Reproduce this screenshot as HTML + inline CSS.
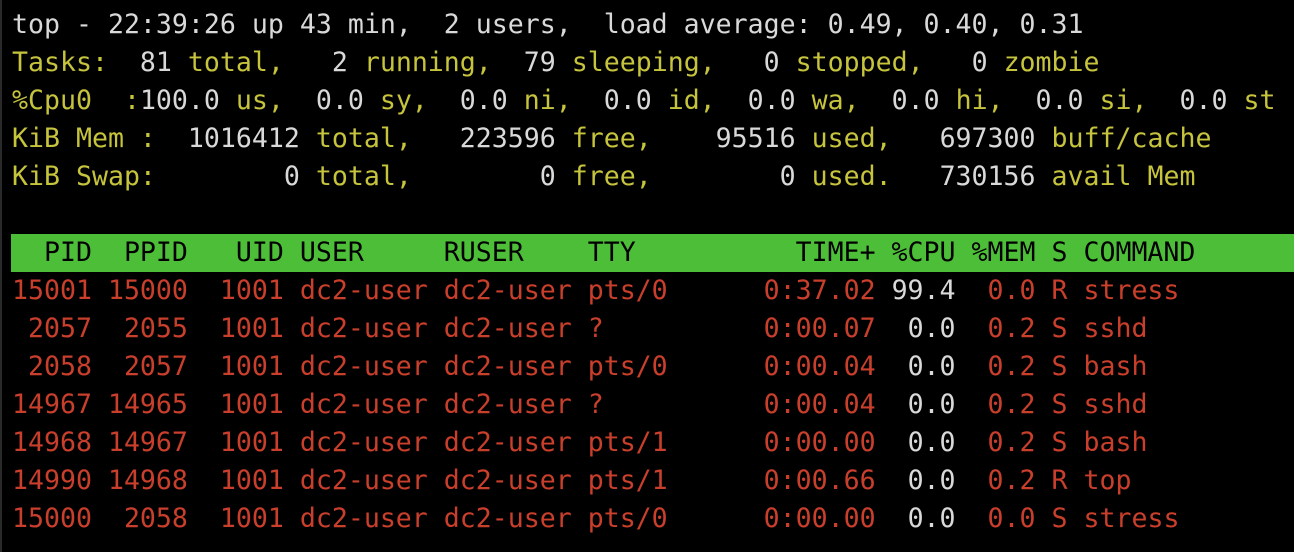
<!DOCTYPE html>
<html><head><meta charset="utf-8"><style>
html,body{margin:0;padding:0;background:#000;width:1294px;height:552px;overflow:hidden}
body{border-left:2px solid #2a2a2a;box-sizing:border-box}
pre{margin:0;position:absolute;left:12px;top:6px;font-family:"DejaVu Sans Mono","Liberation Mono",monospace;font-size:26.57px;line-height:38px;color:#d9d9d9;white-space:pre}
.y{color:#c6c33d}.r{color:#c93f2c}.w{color:#d9d9d9}
.h{display:block;background:#4dbe38;color:#000;width:1290px;margin-left:-1px;padding-left:1px}
</style></head><body><pre>top - 22:39:26 up 43 min,  2 users,  load average: 0.49, 0.40, 0.31
<span class="y">Tasks:</span>  81 <span class="y">total,</span>   2 <span class="y">running,</span>  79 <span class="y">sleeping,</span>   0 <span class="y">stopped,</span>   0 <span class="y">zombie</span>
<span class="y">%Cpu0  :</span>100.0 <span class="y">us,</span>  0.0 <span class="y">sy,</span>  0.0 <span class="y">ni,</span>  0.0 <span class="y">id,</span>  0.0 <span class="y">wa,</span>  0.0 <span class="y">hi,</span>  0.0 <span class="y">si,</span>  0.0 <span class="y">st</span>
<span class="y">KiB Mem :</span>  1016412 <span class="y">total,</span>   223596 <span class="y">free,</span>    95516 <span class="y">used,</span>   697300 <span class="y">buff/cache</span>
<span class="y">KiB Swap:</span>        0 <span class="y">total,</span>        0 <span class="y">free,</span>        0 <span class="y">used.</span>   730156 <span class="y">avail Mem</span>

<span class="h">  PID  PPID   UID USER     RUSER    TTY          TIME+ %CPU %MEM S COMMAND</span><span class="r">15001 15000  1001 dc2-user dc2-user pts/0      0:37.02 <span class="w">99.4</span>  0.0 R stress
 2057  2055  1001 dc2-user dc2-user ?          0:00.07  <span class="w">0.0</span>  0.2 S sshd
 2058  2057  1001 dc2-user dc2-user pts/0      0:00.04  <span class="w">0.0</span>  0.2 S bash
14967 14965  1001 dc2-user dc2-user ?          0:00.04  <span class="w">0.0</span>  0.2 S sshd
14968 14967  1001 dc2-user dc2-user pts/1      0:00.00  <span class="w">0.0</span>  0.2 S bash
14990 14968  1001 dc2-user dc2-user pts/1      0:00.66  <span class="w">0.0</span>  0.2 R top
15000  2058  1001 dc2-user dc2-user pts/0      0:00.00  <span class="w">0.0</span>  0.0 S stress</span></pre></body></html>
